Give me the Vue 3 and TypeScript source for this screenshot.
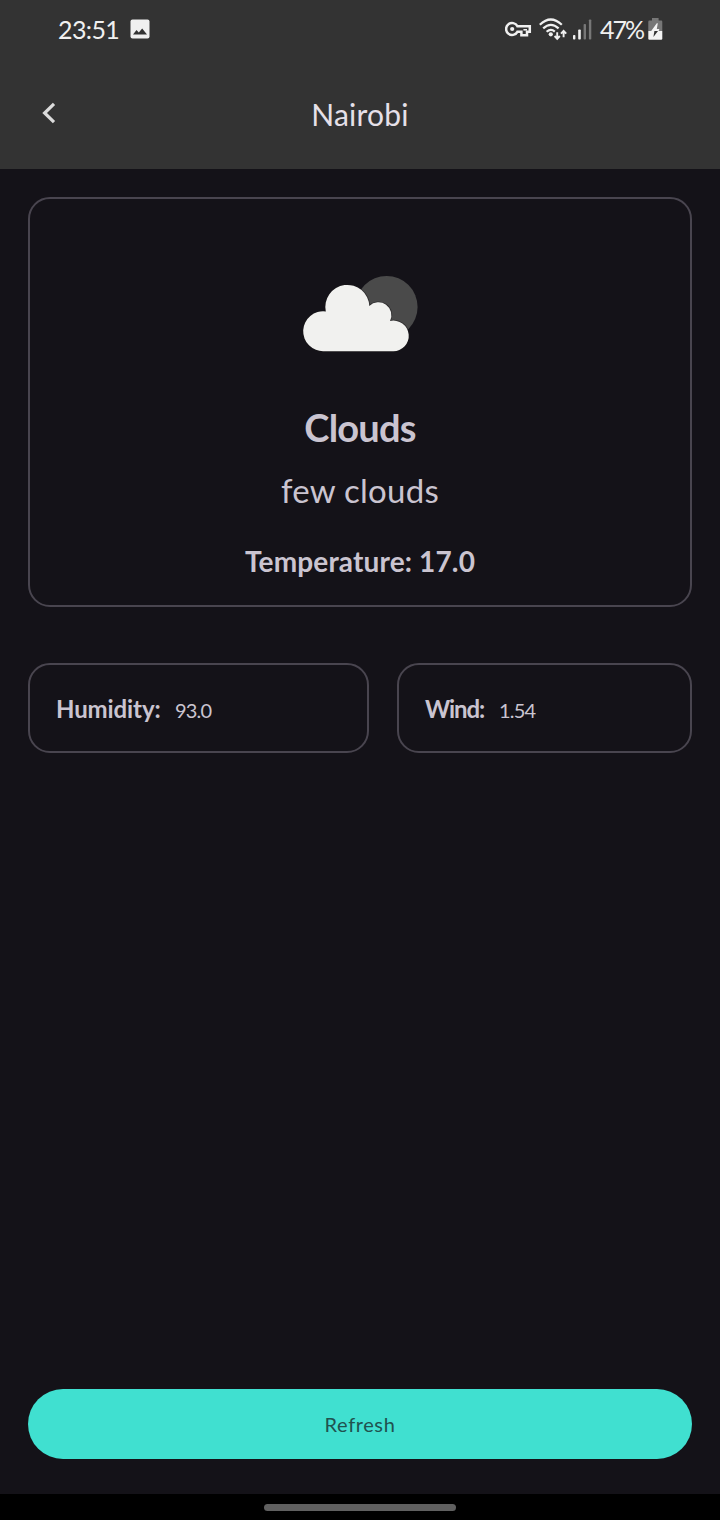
<script setup lang="ts">
import { ref } from 'vue'

interface Weather {
  city: string
  condition: string
  description: string
  temperature: string
  humidity: string
  wind: string
}

const weather = ref<Weather>({
  city: 'Nairobi',
  condition: 'Clouds',
  description: 'few clouds',
  temperature: '17.0',
  humidity: '93.0',
  wind: '1.54',
})
</script>

<template>
  <div class="screen">
    <header class="top">
      <div class="status">
        <div class="status-left">
          <span class="clock">23:51</span>
          <svg class="photo" width="20" height="20" viewBox="0 0 20 20">
            <rect x="0.5" y="0.5" width="19" height="19" rx="2" fill="#f0f0f0" />
            <path d="M3 15.5 L6.5 11 L8.8 13.6 L12.2 9.5 L17 15.5 Z" fill="#333" />
          </svg>
        </div>
        <div class="status-right">
          <svg class="key" width="27" height="16" viewBox="0 0 27 16">
            <path d="M12.4 5.2 A6 6 0 1 0 12.4 10.8 H16.4 V14.3 H22 V10.8 H24.8 V5.2 Z" fill="none" stroke="#f0f0f0" stroke-width="2.5" />
            <path d="M18.4 8.8 H22" fill="none" stroke="#f0f0f0" stroke-width="1.6" />
            <circle cx="7.2" cy="8" r="2.1" fill="#f0f0f0" />
          </svg>
          <svg class="wifi" width="29" height="23" viewBox="0 0 29 23">
            <g fill="none" stroke="#f0f0f0" stroke-width="2.2">
              <path d="M0.8 6.8 Q11.8 -3.8 22.8 6.8" />
              <path d="M4.2 10.4 Q11.8 3.2 19.6 10.4" />
              <path d="M7.6 13.8 Q11.8 10 15.8 13.6" />
              <path d="M18.2 14.2 V20.6 M15.6 18 L18.2 20.8 L20.8 18" stroke-width="1.9" />
              <path d="M24.6 19.2 V13 M22 15.6 L24.6 12.8 L27.2 15.6" stroke-width="1.9" />
            </g>
            <circle cx="11.8" cy="16.3" r="2.1" fill="#f0f0f0" />
          </svg>
          <svg class="signal" width="19" height="21" viewBox="0 0 19 21">
            <rect x="0" y="16" width="2.4" height="4.6" rx="0.8" fill="#f0f0f0" />
            <rect x="5.2" y="10.4" width="2.6" height="10.2" rx="0.8" fill="#f0f0f0" />
            <rect x="10.6" y="5" width="2.4" height="15.6" rx="0.8" fill="#777" />
            <rect x="15.9" y="0.4" width="2.4" height="20.2" rx="0.8" fill="#777" />
          </svg>
          <span class="percent">47%</span>
          <svg class="battery" width="15" height="22" viewBox="0 0 15 22">
            <path d="M4 0 H10.6 V2.6 H13.2 Q14.3 2.6 14.3 3.8 V13 H0.3 V3.8 Q0.3 2.6 1.4 2.6 H4 Z" fill="#777" />
            <path d="M0.3 13 H14.3 V20.6 Q14.3 21.8 13.2 21.8 H1.4 Q0.3 21.8 0.3 20.6 Z" fill="#f4f4f4" />
            <path d="M8.8 5.2 L3.2 13 H10.6 L11.4 11 H8.8 L9.8 5.2 Z" fill="#f4f4f4" />
            <path d="M6.4 13 L5.4 19 L10 13 Z" fill="#333" />
          </svg>
        </div>
      </div>
      <div class="bar">
        <svg class="back" width="14" height="22" viewBox="0 0 14 22">
          <path d="M12 1.8 L2.6 11 L12 20.2" fill="none" stroke="#dcdcdc" stroke-width="3.2" />
        </svg>
        <h1 class="title">{{ weather.city }}</h1>
      </div>
    </header>

    <main class="content">
      <section class="card summary">
        <svg class="cloud" width="116" height="80" viewBox="0 0 116 80">
          <circle cx="84.6" cy="34" r="31" fill="#4a4a4a" />
          <path
            d="M22 78.2 A19.95 19.95 0 1 1 23.8 38.5 A22 22 0 1 1 67.3 33 A12.95 12.95 0 0 1 88 48 A15.3 15.3 0 1 1 91 78.2 Z"
            fill="#f1f1ef" stroke="#19181a" stroke-opacity="0.55" stroke-width="1.6" paint-order="stroke"
          />
        </svg>
        <h2 class="condition">{{ weather.condition }}</h2>
        <p class="description">{{ weather.description }}</p>
        <p class="temperature">Temperature: {{ weather.temperature }}</p>
      </section>
      <div class="details">
        <section class="card detail">
          <span class="label humidity">Humidity:</span>
          <span class="value">{{ weather.humidity }}</span>
        </section>
        <section class="card detail">
          <span class="label wind">Wind:</span>
          <span class="value">{{ weather.wind }}</span>
        </section>
      </div>
      <button class="refresh" type="button">Refresh</button>
    </main>

    <footer class="navbar"><span class="handle"></span></footer>
  </div>
</template>

<style>
body {
  margin: 0;
  background: #141218;
}
</style>

<style scoped>
.screen {
  width: 720px;
  height: 1520px;
  display: flex;
  flex-direction: column;
  overflow: hidden;
  background: #141218;
  color: #cac4d0;
  font-family: Lato, "Open Sans", sans-serif;
}
h1, h2, p {
  margin: 0;
  font-weight: 400;
  white-space: nowrap;
}
svg {
  display: block;
  flex: none;
}
.top {
  height: 169px;
  background: #333;
}
.status {
  height: 58px;
  box-sizing: border-box;
  padding: 0 57px 0 58px;
  display: flex;
  justify-content: space-between;
  color: #f0f0f0;
}
.status-left,
.status-right {
  display: flex;
  align-items: center;
}
.clock {
  width: 72px;
  font-size: 25px;
  line-height: 58px;
  letter-spacing: -0.6px;
}
.key {
  margin-right: 7px;
}
.wifi {
  margin-right: 5px;
}
.signal {
  margin-right: 8px;
}
.percent {
  width: 48px;
  font-size: 25px;
  line-height: 58px;
  letter-spacing: -2px;
}
.bar {
  height: 111px;
  display: grid;
  grid-template-columns: 41px 1fr 41px;
}
.back {
  margin: 44px 0 0 42px;
}
.title {
  padding-top: 34px;
  text-align: center;
  font-size: 30px;
  line-height: 44px;
  letter-spacing: 0.2px;
  color: #e6e0e9;
}
.content {
  flex: 1;
  display: flex;
  flex-direction: column;
  padding: 28px 28px 35px;
}
.card {
  box-sizing: border-box;
  border: 2px solid #49454f;
  border-radius: 22px;
}
.summary {
  height: 410px;
  display: flex;
  flex-direction: column;
  align-items: center;
}
.cloud {
  margin-top: 74px;
}
.condition {
  margin-top: 46px;
  font-size: 38px;
  line-height: 56px;
  font-weight: 700;
  letter-spacing: -0.8px;
}
.description {
  margin-top: 10px;
  font-size: 33px;
  line-height: 50px;
  letter-spacing: 0.25px;
}
.temperature {
  margin-top: 26px;
  font-size: 28px;
  line-height: 40px;
  font-weight: 700;
  letter-spacing: 0.15px;
}
.details {
  margin-top: 56px;
  display: grid;
  grid-template-columns: 341px 295px;
  gap: 28px;
}
.detail {
  height: 90px;
  padding: 0 26px;
  display: flex;
  align-items: baseline;
  line-height: 88px;
}
.label {
  font-size: 24px;
  font-weight: 700;
}
.humidity {
  width: 119px;
  letter-spacing: -0.1px;
}
.wind {
  width: 74px;
  letter-spacing: -1.1px;
}
.value {
  font-size: 20px;
  letter-spacing: -0.8px;
}
.refresh {
  height: 70px;
  margin-top: auto;
  padding: 0;
  border: 0;
  border-radius: 35px;
  background: #40e0d0;
  color: #20524f;
  font-family: inherit;
  font-size: 20px;
  letter-spacing: 0.6px;
}
.navbar {
  height: 26px;
  display: flex;
  justify-content: center;
  background: #000;
}
.handle {
  width: 192px;
  height: 7px;
  margin-top: 10px;
  border-radius: 4px;
  background: #606060;
}
</style>
